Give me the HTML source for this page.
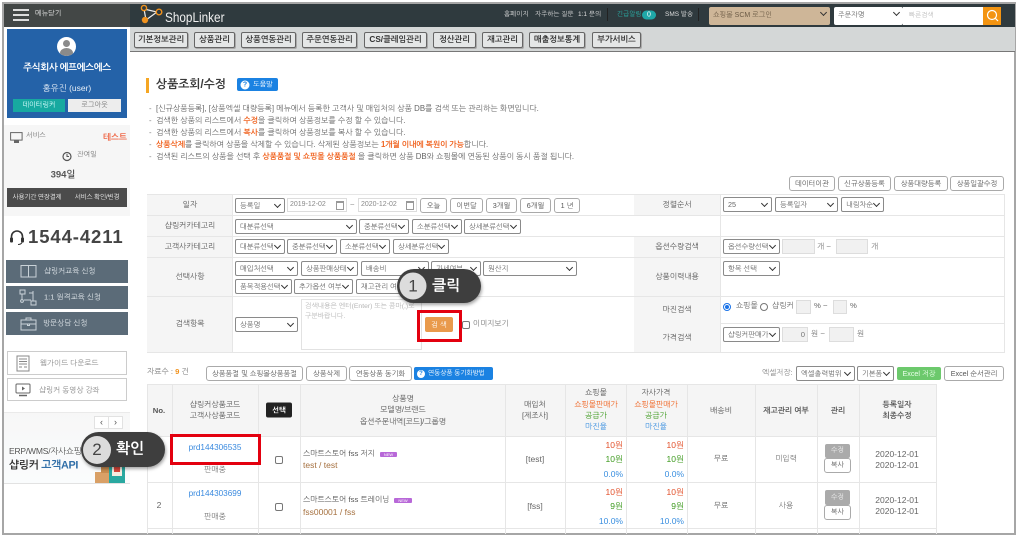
<!DOCTYPE html>
<html lang="ko"><head><meta charset="utf-8"><title>상품조회/수정</title>
<style>
html,body{margin:0;padding:0;background:#fff;width:1018px;height:537px;overflow:hidden}
body{position:relative;font-family:"Liberation Sans","NanumGothic","Noto Sans CJK KR",sans-serif;font-size:7.7px;color:#666}
#w{position:absolute;left:0;top:0;width:1018px;height:537px;overflow:hidden;filter:blur(.35px)}
#w div,#w span.a,#w svg{position:absolute}
.b{box-sizing:border-box}
.t{white-space:nowrap;transform:translateY(-50%);line-height:1}
.c{white-space:nowrap;transform:translate(-50%,-50%);line-height:1;text-align:center}
.r{white-space:nowrap;transform:translate(-100%,-50%);line-height:1}
.nav{box-sizing:border-box;top:32px;height:16px;background:#e4e6e6;border:1px solid #666;border-radius:2px;color:#333;font-weight:700;font-size:8.2px;line-height:14px;text-align:center;white-space:nowrap;box-shadow:1px 1px 0 #aaa}
.s{box-sizing:border-box;background:#fff;border:1px solid #8a8a8a;border-radius:2px;height:15px;color:#666;font-size:7.2px;line-height:13px;padding-left:4px;white-space:nowrap;overflow:hidden}
.s:after{content:"";position:absolute;right:4px;top:3px;width:4px;height:4px;border-right:1.5px solid #333;border-bottom:1.5px solid #333;transform:rotate(45deg)}
.i{box-sizing:border-box;background:#f1f1f1;border:1px solid #ddd;height:15px}
.d{box-sizing:border-box;background:#fff;border:1px solid #ddd;height:14px;top:198px;font-size:7px;line-height:12px;padding-left:2px;color:#888}
.d:after{content:"";position:absolute;right:2px;top:2px;width:6px;height:6px;border:1px solid #999;border-top:2px solid #999}
.g{box-sizing:border-box;background:#fff;border:1px solid #aaa;border-radius:3px;text-align:center;font-size:7.2px;line-height:13px;color:#555;white-space:nowrap}
.l{background:#f5f5f5}
.h{background:#e6e6e6}
.o{color:#f0621e}.gr{color:#3d9a1e}.bl{color:#3a8fe0}
.la{color:#555;font-size:7.7px}
.cb{box-sizing:border-box;width:8px;height:8px;background:#fff;border:1px solid #777;border-radius:2px}
.de{font-size:7.85px;color:#666;letter-spacing:-.02px}
.de b{font-weight:700;letter-spacing:-.12px}
</style></head><body><div id="w">

<!-- frame -->
<div style="left:2px;top:2px;width:1014px;height:533px;box-sizing:border-box;border:2px solid #a6a6a6"></div>

<!-- top bar -->
<div style="left:4px;top:4px;width:126px;height:23px;background:#434746"></div>
<div style="left:130px;top:4px;width:885px;height:23px;background:#2f3a3e"></div>
<div style="left:13px;top:9px;width:16px;height:2px;background:#ddd"></div>
<div style="left:13px;top:14px;width:16px;height:2px;background:#ddd"></div>
<div style="left:13px;top:19px;width:16px;height:2px;background:#ddd"></div>
<div class="t" style="left:35px;top:14px;color:#e8e8e8;font-size:7px">메뉴닫기</div>
<svg style="left:138px;top:3px" width="26" height="22" viewBox="0 0 26 22"><path d="M6 6 L19 9 L8 17 Z" fill="none" stroke="#eee" stroke-width="1.2"/><circle cx="6" cy="5" r="2.6" fill="#2f3a3e" stroke="#f0921e" stroke-width="1.4"/><circle cx="21" cy="9" r="2.8" fill="#2f3a3e" stroke="#f0921e" stroke-width="1.4"/><circle cx="7" cy="17" r="3.2" fill="#f0921e"/></svg>
<div class="t" style="left:165px;top:17px;color:#f0f0f0;font-size:14px;transform-origin:0 50%;transform:translateY(-50%) scaleX(.84)">ShopLinker</div>
<div class="t" style="left:504px;top:15px;color:#ddd;font-size:6.5px">홈페이지</div>
<div class="t" style="left:535px;top:15px;color:#ddd;font-size:6.5px">자주하는 질문</div>
<div class="t" style="left:578px;top:15px;color:#ddd;font-size:6.5px">1:1 문의</div>
<div style="left:607px;top:8px;width:1px;height:13px;background:#222"></div>
<div class="t" style="left:617px;top:15px;color:#2ab5ad;font-size:6.5px">긴급알림</div>
<div class="c" style="left:649px;top:15px;width:14px;height:9px;line-height:9px;border-radius:5px;background:#1fa8a8;color:#fff;font-size:7px;transform:translate(-50%,-50%)">0</div>
<div class="t" style="left:665px;top:15px;color:#ddd;font-size:6.5px">SMS 발송</div>
<div style="left:698px;top:8px;width:1px;height:13px;background:#222"></div>
<div class="s" style="left:709px;top:7px;width:121px;height:18px;background:#ceb698;border:0;line-height:17px;padding-left:4px;color:#6b5a45;font-size:7px">쇼핑몰 SCM 로그인</div>
<div class="s" style="left:834px;top:7px;width:69px;height:18px;border:0;line-height:17px;padding-left:4px;color:#666;font-size:7px">주문자명</div>
<div style="left:903px;top:7px;width:80px;height:18px;background:#fff"></div>
<div class="t" style="left:909px;top:16px;color:#bbb;font-size:6.5px">빠른검색</div>
<div style="left:983px;top:7px;width:18px;height:18px;background:#f39412"></div>
<svg style="left:985px;top:8px" width="15" height="16" viewBox="0 0 15 16"><circle cx="7" cy="7" r="4.5" fill="none" stroke="#fff" stroke-width="1.2"/><path d="M10.5 10.5 L13 13" stroke="#fff" stroke-width="1.2"/></svg>

<!-- sub nav -->
<div style="left:130px;top:27px;width:885px;height:24px;background:#d4d7d7"></div>
<div style="left:130px;top:51px;width:885px;height:1px;background:#777"></div>
<div class="nav" style="left:134px;width:54px">기본정보관리</div>
<div class="nav" style="left:194px;width:41px">상품관리</div>
<div class="nav" style="left:241px;width:55px">상품연동관리</div>
<div class="nav" style="left:302px;width:55px">주문연동관리</div>
<div class="nav" style="left:364px;width:63px">CS/클레임관리</div>
<div class="nav" style="left:433px;width:43px">정산관리</div>
<div class="nav" style="left:482px;width:41px">재고관리</div>
<div class="nav" style="left:529px;width:56px">매출정보통계</div>
<div class="nav" style="left:592px;width:49px">부가서비스</div>

<!-- sidebar -->
<div style="left:4px;top:27px;width:126px;height:98px;background:#fff"></div>
<div style="left:7px;top:29px;width:120px;height:89px;background:#2462a8"></div>
<div style="left:57px;top:37px;width:19px;height:19px;border-radius:50%;background:#fff;overflow:hidden"><div style="left:6px;top:3px;width:7px;height:7px;border-radius:50%;background:#8a8a8a"></div><div style="left:3px;top:11px;width:13px;height:10px;border-radius:50%;background:#8a8a8a"></div></div>
<div class="c" style="left:67px;top:68px;color:#fff;font-weight:700;font-size:9.5px;letter-spacing:-.4px">주식회사 에프에스에스</div>
<div class="c" style="left:67px;top:88px;color:#e6eef7;font-size:8.5px">홍유진 (user)</div>
<div class="c b" style="left:13px;top:99px;width:52px;height:13px;line-height:13px;background:#17a9a0;color:#dff;font-size:7px;transform:none">데이터링커</div>
<div class="c b" style="left:68px;top:99px;width:53px;height:13px;line-height:13px;background:#ededed;color:#777;font-size:7px;transform:none">로그아웃</div>

<div style="left:4px;top:125px;width:126px;height:91px;background:#f6f6f6"></div>
<svg style="left:10px;top:132px" width="13" height="12" viewBox="0 0 13 12"><rect x=".6" y=".6" width="11.5" height="7.5" fill="none" stroke="#666"/><rect x="4" y="8.5" width="5" height="2.5" fill="#666"/></svg>
<div class="t" style="left:26px;top:136px;font-size:7px;color:#777">서비스</div>
<div class="r" style="left:127px;top:137px;color:#ef6a4a;font-weight:700;font-size:8.5px">테스트</div>
<svg style="left:62px;top:151px" width="10" height="11" viewBox="0 0 10 11"><circle cx="5" cy="5.5" r="4" fill="none" stroke="#555" stroke-width="1.2"/><path d="M5 3 V5.5 H7" fill="none" stroke="#555"/></svg>
<div class="t" style="left:77px;top:155px;font-size:7px;color:#777">잔여일</div>
<div class="c" style="left:63px;top:175px;font-size:9.5px;font-weight:700;color:#555">394일</div>
<div style="left:7px;top:188px;width:120px;height:19px;background:#4b4b4b"></div>
<div class="c" style="left:37px;top:198px;font-size:6.5px;color:#eee;letter-spacing:-.2px">사용기간 연장결제</div>
<div class="c" style="left:97px;top:198px;font-size:6.5px;color:#eee;letter-spacing:-.2px">서비스 확인/변경</div>

<svg style="left:9px;top:229px" width="16" height="17" viewBox="0 0 16 17"><path d="M2.5 10 V7.5 A5.5 5.5 0 0 1 13.5 7.5 V10" fill="none" stroke="#333" stroke-width="1.6"/><rect x="1" y="8.5" width="3" height="5" rx="1" fill="#333"/><rect x="12" y="8.5" width="3" height="5" rx="1" fill="#333"/><path d="M13 13.5 Q12 15.5 9 15.5" fill="none" stroke="#333"/></svg>
<div class="t" style="left:28px;top:237px;font-size:18.5px;font-weight:700;color:#444;letter-spacing:.9px">1544-4211</div>

<div style="left:6px;top:260px;width:122px;height:23px;background:#5b6b78"></div>
<div style="left:6px;top:286px;width:122px;height:23px;background:#5b6b78"></div>
<div style="left:6px;top:312px;width:122px;height:23px;background:#5b6b78"></div>
<svg style="left:20px;top:264px" width="17" height="15" viewBox="0 0 17 15"><rect x="1" y="1.5" width="15" height="11.5" fill="none" stroke="#c9d2d8"/><path d="M8.5 1.5 V13" stroke="#c9d2d8"/></svg>
<svg style="left:19px;top:288px" width="18" height="19" viewBox="0 0 18 19"><path d="M1 2 H6 V6 H1 Z M12 13 H17 V17 H12 Z M3 6 V12 M5 12 H12 M14 3 V13 M10 5 H14" fill="none" stroke="#c9d2d8"/><circle cx="3" cy="13" r="1.4" fill="none" stroke="#c9d2d8"/></svg>
<svg style="left:20px;top:317px" width="17" height="14" viewBox="0 0 17 14"><rect x="1" y="3" width="15" height="10" fill="none" stroke="#c9d2d8"/><path d="M6 3 V1 H11 V3 M1 7 H16 M7.5 7 H9.5 V8.5 H7.5 Z" fill="none" stroke="#c9d2d8"/></svg>
<div class="t" style="left:44px;top:271px;font-size:7.5px;color:#dde3e7">샵링커교육 신청</div>
<div class="t" style="left:44px;top:297px;font-size:7.5px;color:#dde3e7">1:1 원격교육 신청</div>
<div class="t" style="left:43px;top:323px;font-size:7.5px;color:#dde3e7">방문상담 신청</div>

<div class="b" style="left:7px;top:351px;width:120px;height:24px;border:1px solid #ccc;background:#fff"></div>
<div class="b" style="left:7px;top:378px;width:120px;height:23px;border:1px solid #ccc;background:#fff"></div>
<svg style="left:16px;top:355px" width="14" height="17" viewBox="0 0 14 17"><rect x="1" y="1" width="12" height="15" fill="none" stroke="#888"/><path d="M3 4 H11 M3 6.5 H11 M3 9 H11 M3 12 H6 M8 12 H11" stroke="#888"/></svg>
<svg style="left:15px;top:383px" width="16" height="14" viewBox="0 0 16 14"><rect x="1" y="1" width="14" height="9" rx="1" fill="none" stroke="#666"/><path d="M7 3.5 L10 5.5 L7 7.5 Z" fill="#666"/><path d="M4 12.5 H12" stroke="#666" stroke-width="1.5"/></svg>
<div class="t" style="left:40px;top:363px;font-size:7.5px;color:#888">웹가이드 다운로드</div>
<div class="t" style="left:39px;top:390px;font-size:7.5px;color:#888">샵링커 동영상 강좌</div>

<div style="left:4px;top:412px;width:126px;height:71px;background:linear-gradient(#f7f7f7,#fafcfd)"></div>
<div style="left:4px;top:412px;width:126px;height:1px;background:#eaeaea"></div>
<div style="left:4px;top:483px;width:126px;height:1px;background:#e2e2e2"></div>
<div class="b" style="left:94px;top:416px;width:15px;height:13px;border:1px solid #e2e2e2;background:#fff;text-align:center;line-height:10px;color:#555;font-size:9px">‹</div>
<div class="b" style="left:108px;top:416px;width:15px;height:13px;border:1px solid #e2e2e2;background:#fff;text-align:center;line-height:10px;color:#555;font-size:9px">›</div>
<div class="t" style="left:9px;top:451px;font-size:8.5px;color:#555;letter-spacing:-.2px">ERP/WMS/자사쇼핑몰</div>
<div class="t" style="left:9px;top:466px;font-size:10.8px;font-weight:700;color:#333;letter-spacing:-.3px">샵링커 <span style="color:#2f6ea8">고객API</span></div>
<div style="left:95px;top:472px;width:14px;height:11px;background:#d9a066"></div>
<div style="left:101px;top:464px;width:10px;height:9px;background:#c98d50"></div>
<div style="left:109px;top:460px;width:16px;height:23px;background:#29a8a0"></div>
<div style="left:112px;top:464px;width:10px;height:12px;background:#f5ece0"></div>
<div style="left:114px;top:467px;width:6px;height:5px;background:#d8453a"></div>

<!-- title -->
<div style="left:146px;top:78px;width:3px;height:15px;background:#f5a623"></div>
<div class="t" style="left:156px;top:85px;font-size:11.8px;font-weight:700;color:#3a3a3a">상품조회/수정</div>
<div style="left:237px;top:78px;width:41px;height:13px;background:#1b82e2;border-radius:2px"></div>
<div class="c" style="left:245px;top:85px;width:9px;height:9px;line-height:9px;border-radius:50%;background:#fff;color:#1b82e2;font-weight:700;font-size:7px">?</div>
<div class="t" style="left:253px;top:85px;color:#fff;font-size:7px">도움말</div>

<!-- description -->
<div class="t" style="left:149px;top:109px;color:#777">-</div>
<div class="t" style="left:149px;top:121px;color:#777">-</div>
<div class="t" style="left:149px;top:133px;color:#777">-</div>
<div class="t" style="left:149px;top:145px;color:#777">-</div>
<div class="t" style="left:149px;top:157px;color:#777">-</div>
<div class="t de" style="left:156px;top:109px">[신규상품등록], [상품엑셀 대량등록] 메뉴에서 등록한 고객사 및 매입처의 상품 DB를 검색 또는 관리하는 화면입니다.</div>
<div class="t de" style="left:156px;top:121px">검색한 상품의 리스트에서 <b class="o">수정</b>을 클릭하여 상품정보를 수정 할 수 있습니다.</div>
<div class="t de" style="left:156px;top:133px">검색한 상품의 리스트에서 <b class="o">복사</b>를 클릭하여 상품정보를 복사 할 수 있습니다.</div>
<div class="t de" style="left:156px;top:145px"><b class="o">상품삭제</b>를 클릭하여 상품을 삭제할 수 있습니다. 삭제된 상품정보는 <b class="o">1개월 이내에 복원이 가능</b>합니다.</div>
<div class="t de" style="left:156px;top:157px">검색된 리스트의 상품을 선택 후 <b class="o">상품품절 및 쇼핑몰 상품품절</b> 을 클릭하면 상품 DB와 쇼핑몰에 연동된 상품이 동시 품절 됩니다.</div>

<!-- top buttons -->
<div class="g" style="left:789px;top:176px;width:46px;height:15px">데이터이관</div>
<div class="g" style="left:838px;top:176px;width:53px;height:15px">신규상품등록</div>
<div class="g" style="left:894px;top:176px;width:54px;height:15px">상품대량등록</div>
<div class="g" style="left:950px;top:176px;width:54px;height:15px">상품일괄수정</div>

<!-- form table -->
<div style="left:147px;top:194px;width:85px;height:158px" class="l"></div>
<div style="left:634px;top:194px;width:86px;height:21px" class="l"></div>
<div style="left:634px;top:236px;width:86px;height:116px" class="l"></div>
<div style="left:147px;top:194px;width:857px;height:1px" class="h"></div>
<div style="left:147px;top:215px;width:857px;height:1px" class="h"></div>
<div style="left:147px;top:236px;width:857px;height:1px" class="h"></div>
<div style="left:147px;top:257px;width:857px;height:1px" class="h"></div>
<div style="left:147px;top:296px;width:857px;height:1px" class="h"></div>
<div style="left:720px;top:323px;width:284px;height:1px" class="h"></div>
<div style="left:147px;top:352px;width:857px;height:1px" class="h"></div>
<div style="left:232px;top:194px;width:1px;height:158px" class="h"></div>
<div style="left:720px;top:194px;width:1px;height:158px" class="h"></div>
<div style="left:1004px;top:194px;width:1px;height:159px" class="h"></div>

<div class="c la" style="left:190px;top:205px">일자</div>
<div class="c la" style="left:190px;top:226px">샵링커카테고리</div>
<div class="c la" style="left:190px;top:247px">고객사카테고리</div>
<div class="c la" style="left:190px;top:277px">선택사항</div>
<div class="c la" style="left:190px;top:324px">검색항목</div>
<div class="c la" style="left:677px;top:205px">정렬순서</div>
<div class="c la" style="left:677px;top:247px">옵션수량검색</div>
<div class="c la" style="left:677px;top:277px">상품이력내용</div>
<div class="c la" style="left:677px;top:310px">마진검색</div>
<div class="c la" style="left:677px;top:338px">가격검색</div>

<div class="s" style="left:235px;top:198px;width:50px">등록일</div>
<div class="d" style="left:287px;width:60px">2019-12-02</div>
<div class="t" style="left:350px;top:205px;color:#888">~</div>
<div class="d" style="left:358px;width:59px">2020-12-02</div>
<div class="g" style="left:420px;top:198px;width:27px;height:15px">오늘</div>
<div class="g" style="left:450px;top:198px;width:33px;height:15px">이번달</div>
<div class="g" style="left:486px;top:198px;width:31px;height:15px">3개월</div>
<div class="g" style="left:520px;top:198px;width:31px;height:15px">6개월</div>
<div class="g" style="left:554px;top:198px;width:26px;height:15px">1 년</div>

<div class="s" style="left:235px;top:219px;width:122px">대분류선택</div>
<div class="s" style="left:359px;top:219px;width:50px">중분류선택</div>
<div class="s" style="left:412px;top:219px;width:50px">소분류선택</div>
<div class="s" style="left:464px;top:219px;width:57px">상세분류선택</div>

<div class="s" style="left:235px;top:239px;width:50px">대분류선택</div>
<div class="s" style="left:287px;top:239px;width:50px">중분류선택</div>
<div class="s" style="left:340px;top:239px;width:50px">소분류선택</div>
<div class="s" style="left:393px;top:239px;width:56px">상세분류선택</div>

<div class="s" style="left:235px;top:261px;width:63px">매입처선택</div>
<div class="s" style="left:301px;top:261px;width:57px">상품판매상태</div>
<div class="s" style="left:361px;top:261px;width:68px">배송비</div>
<div class="s" style="left:431px;top:261px;width:50px">과세여부</div>
<div class="s" style="left:483px;top:261px;width:94px">원산지</div>

<div class="s" style="left:235px;top:279px;width:57px">품목적용선택</div>
<div class="s" style="left:294px;top:279px;width:59px">추가옵션 여부</div>
<div class="s" style="left:356px;top:279px;width:64px">재고관리 여부</div>

<div class="s" style="left:235px;top:317px;width:63px">상품명</div>
<div class="b" style="left:301px;top:299px;width:121px;height:51px;border:1px solid #e2e2e2;background:#fff;padding:2px 3px;color:#b5b5b5;font-size:6.8px;line-height:10px">검색내용은 엔터(Enter) 또는 콤마(,)로<br>구분바랍니다.</div>

<div class="c" style="left:425px;top:317px;width:28px;height:15px;line-height:15px;background:#e99a4c;color:#fff;border-radius:2px;font-size:7.2px;transform:none">검 색</div>
<div class="b" style="left:417px;top:310px;width:45px;height:32px;border:3px solid #e3000f"></div>
<div class="cb" style="left:462px;top:321px"></div>
<div class="t" style="left:473px;top:324px;font-size:7.6px;color:#777">이미지보기</div>

<div class="s" style="left:723px;top:197px;width:49px">25</div>
<div class="s" style="left:775px;top:197px;width:63px">등록일자</div>
<div class="s" style="left:841px;top:197px;width:43px">내림차순</div>

<div class="s" style="left:723px;top:239px;width:57px">옵션수량선택</div>
<div class="i" style="left:782px;top:239px;width:33px"></div>
<div class="t" style="left:817px;top:247px;color:#777">개 ~</div>
<div class="i" style="left:836px;top:239px;width:32px"></div>
<div class="t" style="left:871px;top:247px;color:#777">개</div>
<div class="s" style="left:723px;top:261px;width:57px">항목 선택</div>

<div class="b" style="left:723px;top:303px;width:8px;height:8px;border-radius:50%;border:1px solid #1a73e8;background:#fff"></div>
<div style="left:725px;top:305px;width:4px;height:4px;border-radius:50%;background:#1a73e8"></div>
<div class="t" style="left:736px;top:306px;color:#666">쇼핑몰</div>
<div class="b" style="left:760px;top:303px;width:8px;height:8px;border-radius:50%;border:1px solid #777;background:#fff"></div>
<div class="t" style="left:772px;top:306px;color:#666">샵링커</div>
<div class="i" style="left:796px;top:300px;width:15px;height:14px"></div>
<div class="t" style="left:814px;top:306px;color:#666">% ~</div>
<div class="i" style="left:833px;top:300px;width:14px;height:14px"></div>
<div class="t" style="left:850px;top:306px;color:#666">%</div>

<div class="s" style="left:723px;top:327px;width:57px">샵링커판매가</div>
<div class="i" style="left:782px;top:327px;width:26px;text-align:right;padding-right:2px;line-height:13px;color:#777">0</div>
<div class="t" style="left:811px;top:334px;color:#777">원 ~</div>
<div class="i" style="left:829px;top:327px;width:25px"></div>
<div class="t" style="left:857px;top:334px;color:#777">원</div>

<!-- list toolbar -->
<div class="t" style="left:147px;top:372px;color:#777">자료수 : <b style="color:#f0921e">9</b> 건</div>
<div class="g" style="left:206px;top:366px;width:97px;height:15px">상품품절 및 쇼핑몰상품품절</div>
<div class="g" style="left:306px;top:366px;width:41px;height:15px">상품삭제</div>
<div class="g" style="left:349px;top:366px;width:63px;height:15px">연동상품 동기화</div>
<div style="left:414px;top:367px;width:79px;height:13px;background:#1b82e2;border-radius:2px"></div>
<div class="c" style="left:421px;top:373.5px;width:8px;height:8px;line-height:8px;border-radius:50%;background:#fff;color:#1b82e2;font-weight:700;font-size:6px">?</div>
<div class="t" style="left:428px;top:374px;color:#fff;font-size:6.5px">연동상품 동기화방법</div>
<div class="t" style="left:762px;top:373px;color:#888;font-size:7.6px">엑셀저장:</div>
<div class="s" style="left:796px;top:366px;width:59px">엑셀출력범위</div>
<div class="s" style="left:857px;top:366px;width:37px">기본폼</div>
<div class="c" style="left:897px;top:367px;width:44px;height:13px;line-height:13px;background:#6cc96c;color:#eaffea;border-radius:2px;font-size:7.2px;transform:none">Excel 저장</div>
<div class="g" style="left:944px;top:366px;width:60px;height:15px">Excel 순서관리</div>

<!-- list table -->
<div class="l" style="left:147px;top:384px;width:789px;height:52px"></div>
<div class="h" style="left:147px;top:384px;width:789px;height:1px"></div>
<div class="h" style="left:147px;top:436px;width:789px;height:1px"></div>
<div class="h" style="left:147px;top:482px;width:789px;height:1px"></div>
<div class="h" style="left:147px;top:528px;width:789px;height:1px"></div>
<div class="h" style="left:147px;top:384px;width:1px;height:150px"></div>
<div class="h" style="left:172px;top:384px;width:1px;height:150px"></div>
<div class="h" style="left:258px;top:384px;width:1px;height:150px"></div>
<div class="h" style="left:300px;top:384px;width:1px;height:150px"></div>
<div class="h" style="left:505px;top:384px;width:1px;height:150px"></div>
<div class="h" style="left:565px;top:384px;width:1px;height:150px"></div>
<div class="h" style="left:626px;top:384px;width:1px;height:150px"></div>
<div class="h" style="left:687px;top:384px;width:1px;height:150px"></div>
<div class="h" style="left:755px;top:384px;width:1px;height:150px"></div>
<div class="h" style="left:817px;top:384px;width:1px;height:150px"></div>
<div class="h" style="left:859px;top:384px;width:1px;height:150px"></div>
<div class="h" style="left:936px;top:384px;width:1px;height:150px"></div>

<div class="c" style="left:159px;top:411px;font-weight:700;color:#555">No.</div>
<div class="c" style="left:215px;top:405px;color:#555">샵링커상품코드</div>
<div class="c" style="left:215px;top:416px;color:#555">고객사상품코드</div>
<div class="c" style="left:279px;top:409.5px;width:26px;height:15px;line-height:15px;background:#222;color:#fff;border-radius:2px;font-size:7.2px;font-weight:700">선택</div>
<div class="c" style="left:403px;top:399px;color:#555">상품명</div>
<div class="c" style="left:403px;top:410px;color:#555">모델명/브랜드</div>
<div class="c" style="left:403px;top:422px;color:#555">옵션주문내역[코드]/그룹명</div>
<div class="c" style="left:535px;top:405px;color:#555">매입처</div>
<div class="c" style="left:535px;top:416px;color:#555">[제조사]</div>
<div class="c" style="left:596px;top:393px;color:#555">쇼핑몰</div>
<div class="c o" style="left:596px;top:405px">쇼핑몰판매가</div>
<div class="c gr" style="left:596px;top:416px">공급가</div>
<div class="c bl" style="left:596px;top:427px">마진율</div>
<div class="c" style="left:656px;top:393px;color:#555">자사가격</div>
<div class="c o" style="left:656px;top:405px">쇼핑몰판매가</div>
<div class="c gr" style="left:656px;top:416px">공급가</div>
<div class="c bl" style="left:656px;top:427px">마진율</div>
<div class="c" style="left:721px;top:411px;color:#555">배송비</div>
<div class="c" style="left:786px;top:411px;color:#555;font-weight:700">재고관리 여부</div>
<div class="c" style="left:838px;top:411px;color:#555;font-weight:700">관리</div>
<div class="c" style="left:897px;top:405px;color:#555;font-weight:700">등록일자</div>
<div class="c" style="left:897px;top:416px;color:#555;font-weight:700">최종수정</div>

<!-- row 1 -->
<div class="c" style="left:215px;top:448px;font-size:8.2px;color:#3a8adf">prd144306535</div>
<div class="c" style="left:215px;top:470px;color:#777">판매중</div>
<div class="cb" style="left:275px;top:456px"></div>
<div class="t" style="left:303px;top:454px;color:#555">스마트스토어 fss 저지</div>
<div class="c" style="left:380px;top:452px;width:17px;height:5px;line-height:5px;background:#b868d8;color:#fff;font-size:4px;border-radius:1px;transform:none">NEW</div>
<div class="t" style="left:303px;top:465px;color:#a5703f;font-size:8.5px">test / test</div>
<div class="c" style="left:535px;top:459px;color:#666;font-size:8.5px">[test]</div>
<div class="r" style="left:623px;top:445px;color:#e2502a;font-size:8.5px">10원</div>
<div class="r gr" style="left:623px;top:459px;font-size:8.5px">10원</div>
<div class="r bl" style="left:623px;top:474px;font-size:8.5px">0.0%</div>
<div class="r" style="left:684px;top:445px;color:#e2502a;font-size:8.5px">10원</div>
<div class="r gr" style="left:684px;top:459px;font-size:8.5px">10원</div>
<div class="r bl" style="left:684px;top:474px;font-size:8.5px">0.0%</div>
<div class="c" style="left:721px;top:459px;color:#666">무료</div>
<div class="c" style="left:786px;top:459px;color:#777">미입력</div>
<div class="c" style="left:825px;top:444px;width:25px;height:14px;line-height:14px;background:#aaa;color:#eee;border-radius:2px;font-size:7px;transform:none">수정</div>
<div class="g" style="left:824px;top:458px;width:27px;height:15px;color:#555;font-size:7px">복사</div>
<div class="c" style="left:897px;top:454px;font-size:8.5px;color:#666">2020-12-01</div>
<div class="c" style="left:897px;top:465px;font-size:8.5px;color:#666">2020-12-01</div>

<!-- row 2 -->
<div class="c" style="left:159px;top:505px;color:#666;font-size:8.5px">2</div>
<div class="c" style="left:215px;top:494px;font-size:8.2px;color:#3a8adf">prd144303699</div>
<div class="c" style="left:215px;top:517px;color:#777">판매중</div>
<div class="cb" style="left:275px;top:503px"></div>
<div class="t" style="left:303px;top:500px;color:#555">스마트스토어 fss 트레이닝</div>
<div class="c" style="left:394px;top:498px;width:18px;height:5px;line-height:5px;background:#b868d8;color:#fff;font-size:4px;border-radius:1px;transform:none">NEW</div>
<div class="t" style="left:303px;top:512px;color:#a5703f;font-size:8.5px">fss00001 / fss</div>
<div class="c" style="left:535px;top:506px;color:#666;font-size:8.5px">[fss]</div>
<div class="r" style="left:623px;top:492px;color:#e2502a;font-size:8.5px">10원</div>
<div class="r gr" style="left:623px;top:506px;font-size:8.5px">9원</div>
<div class="r bl" style="left:623px;top:521px;font-size:8.5px">10.0%</div>
<div class="r" style="left:684px;top:492px;color:#e2502a;font-size:8.5px">10원</div>
<div class="r gr" style="left:684px;top:506px;font-size:8.5px">9원</div>
<div class="r bl" style="left:684px;top:521px;font-size:8.5px">10.0%</div>
<div class="c" style="left:721px;top:506px;color:#666">무료</div>
<div class="c" style="left:786px;top:506px;color:#777">사용</div>
<div class="c" style="left:825px;top:490px;width:25px;height:15px;line-height:15px;background:#aaa;color:#eee;border-radius:2px;font-size:7px;transform:none">수정</div>
<div class="g" style="left:824px;top:505px;width:27px;height:15px;color:#555;font-size:7px">복사</div>
<div class="c" style="left:897px;top:500px;font-size:8.5px;color:#666">2020-12-01</div>
<div class="c" style="left:897px;top:511px;font-size:8.5px;color:#666">2020-12-01</div>

<!-- annotation 2 red box -->
<div class="b" style="left:170px;top:434px;width:91px;height:31px;border:3px solid #e3000f"></div>

<!-- balloon 1 -->
<div style="left:397px;top:269px;width:84px;height:34px;border-radius:17px;background:#3e3e3e;box-shadow:1px 2px 3px rgba(0,0,0,.35)"></div>
<div class="c" style="left:413px;top:286px;width:27px;height:27px;line-height:27px;border-radius:50%;background:#dcdcdc;color:#444;font-size:17px">1</div>
<div class="t" style="left:432px;top:286px;color:#fff;font-weight:700;font-size:15px">클릭</div>

<!-- balloon 2 -->
<div style="left:81px;top:432px;width:84px;height:35px;border-radius:17.5px;background:#3e3e3e;box-shadow:1px 2px 3px rgba(0,0,0,.35)"></div>
<div class="c" style="left:97px;top:449.5px;width:28px;height:28px;line-height:28px;border-radius:50%;background:#dcdcdc;color:#444;font-size:17px">2</div>
<div class="t" style="left:116px;top:449px;color:#fff;font-weight:700;font-size:15px">확인</div>

</div></body></html>
